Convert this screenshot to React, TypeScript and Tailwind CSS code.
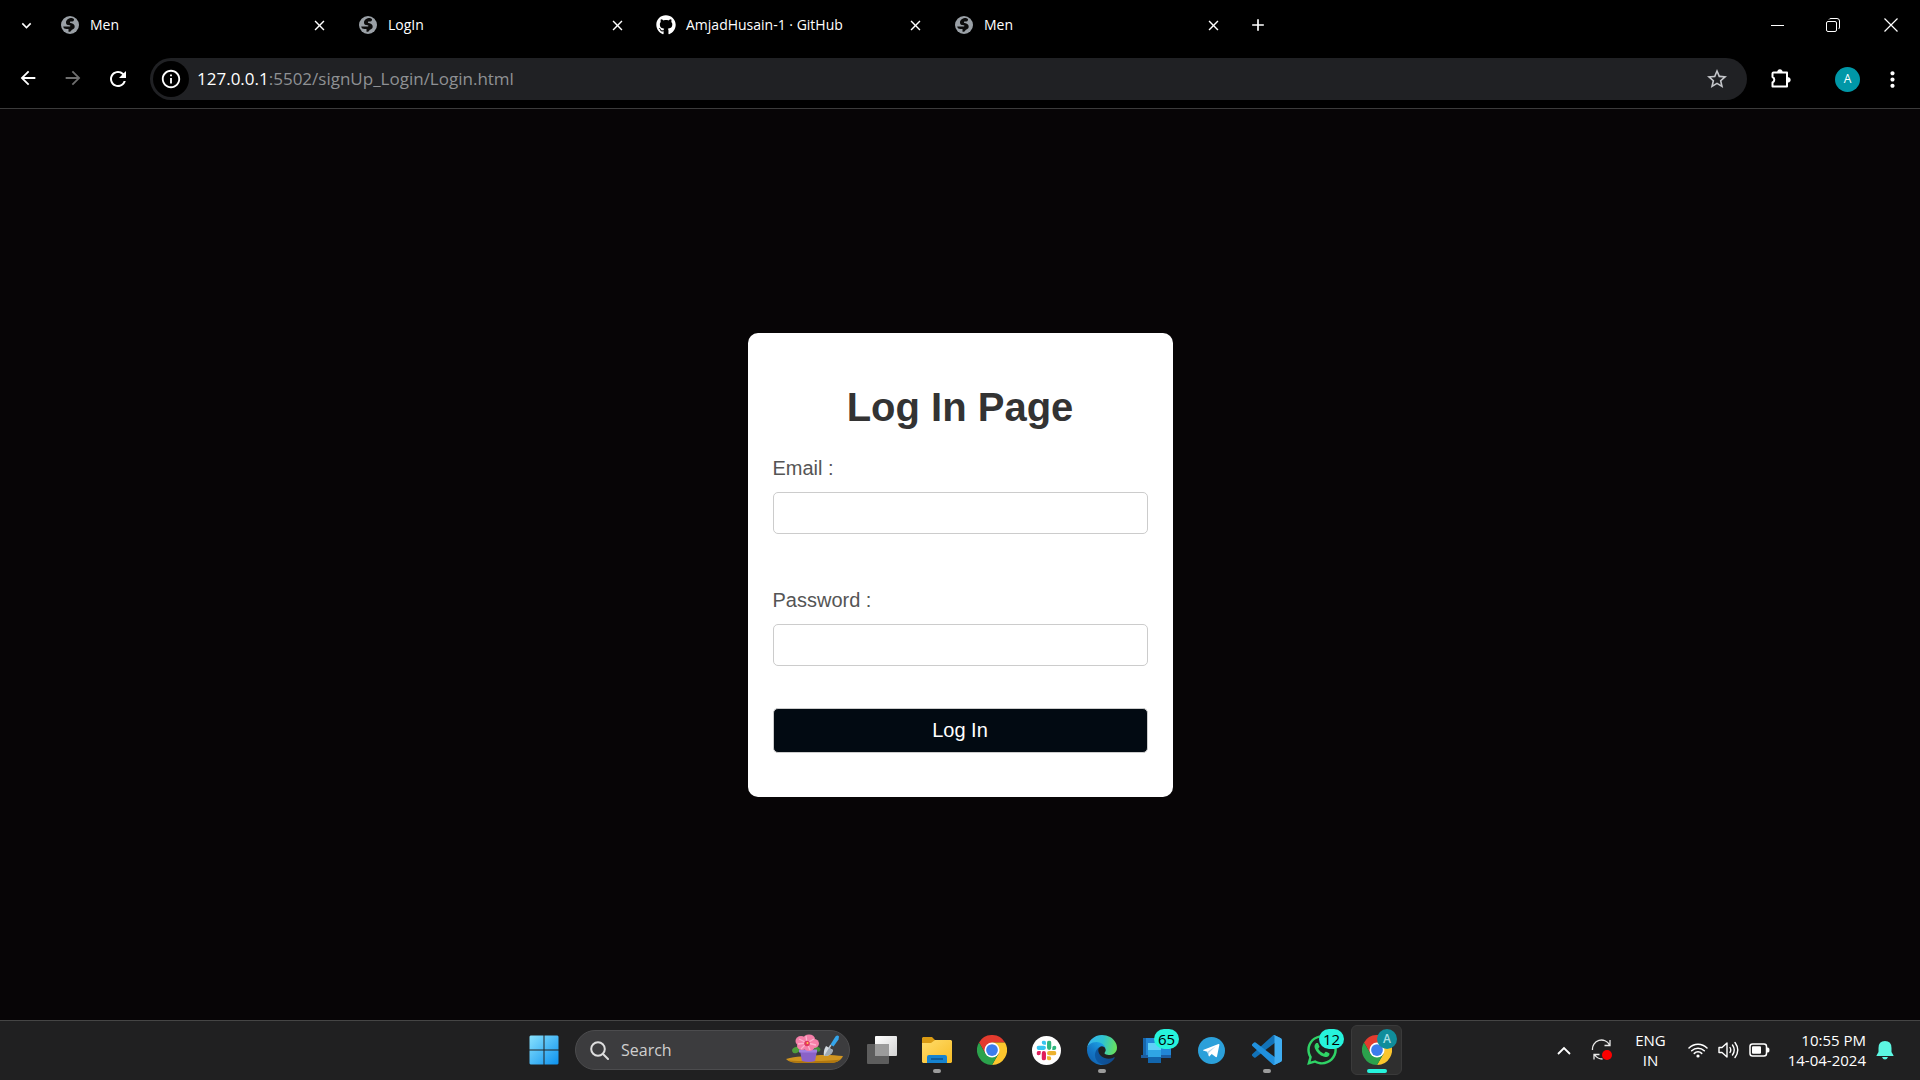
import React from "react";
import { MdArrowBack, MdArrowForward, MdRefresh, MdInfoOutline, MdStarBorder, MdMoreVert, MdClose, MdAdd, MdKeyboardArrowDown } from "react-icons/md";
import { FaGithub, FaWhatsapp } from "react-icons/fa";

const tabs = [
  { title: "Men", github: false },
  { title: "LogIn", github: false },
  { title: "AmjadHusain-1 · GitHub", github: true },
  { title: "Men", github: false },
];

function GlobeIcon() {
  return (
    <svg width="18" height="18" viewBox="0 0 18 18">
      <circle cx="9" cy="9" r="9" fill="#9aa0a6" />
      <path d="M11 2C7.500 2 5 4 5 6.500 5 9 7 9 8.800 9.200c.8.100.8 1 .1 1.300H2.200c.4 1.800 1.500 2.500 3.300 2.500h2v2.800c3.300.2 2.300-1.800 4-2.300 2-.6 2.500-2.200 2-4-.5-1.700-2.500-2.500-4-2.600-.8-.1-.7-1 0-1.400h1.800c1.200 0 1.700-.8 1.700-2.500z" fill="#0b0b0b" />
    </svg>
  );
}

function Tab({ title, github }: { title: string; github: boolean }) {
  return (
    <div className="flex w-[298px] items-center pl-2 pr-[22px]">
      <button className="flex grow items-center gap-2.5 text-left">
        <span className="flex w-5 justify-center">
          {github ? <FaGithub size={20} /> : <GlobeIcon />}
        </span>
        <span>{title}</span>
      </button>
      <button aria-label="Close tab">
        <MdClose size={17} />
      </button>
    </div>
  );
}

function ChromeLogo() {
  return (
    <svg width="30" height="30" viewBox="0 0 48 48">
      <path d="M24 12H44.8A24 24 0 0 0 3.2 12L13.6 30z" fill="#e33b2e" />
      <path d="M34.4 30 24 48A24 24 0 0 0 44.8 12H24z" fill="#fcc62d" />
      <path d="M13.6 30 3.2 12A24 24 0 0 0 24 48L34.4 30z" fill="#2ba24c" />
      <circle cx="24" cy="24" r="12" fill="#fff" />
      <circle cx="24" cy="24" r="9.4" fill="#3b7ded" />
    </svg>
  );
}

function WindowsLogo() {
  return (
    <svg width="30" height="30" viewBox="0 0 30 30">
      <defs>
        <linearGradient id="win" x1="0" y1="0" x2="30" y2="30" gradientUnits="userSpaceOnUse">
          <stop stopColor="#8be3fd" />
          <stop offset="1" stopColor="#0a90ee" />
        </linearGradient>
      </defs>
      <path fill="url(#win)" d="M1.500.500H14.500V14.500H.500V1.500zM15.500.500H28.500L29.500 1.500V14.500H15.500zM.500 15.500H14.500V29.500H1.500L.500 28.500zM15.500 15.500H29.500V28.500L28.500 29.500H15.500z" />
    </svg>
  );
}

function FlowerPot() {
  return (
    <svg width="60" height="32" viewBox="0 0 60 32">
      <path d="M1 25c7-2 14-3 20-2 12-3 26-2 37-1-2 5-8 7-13 7H16C9 29 4 28 1 25z" fill="#cf9420" />
      <path d="M3 26.500c14 1 38 1 52-1-3 3-6 3.500-10 3.500H16c-6 0-10-1-13-2.500z" fill="#b0770f" />
      <ellipse cx="11" cy="16" rx="4" ry="3" fill="#4e9d3c" transform="rotate(-25 11 16)" />
      <ellipse cx="32" cy="15" rx="3.500" ry="2.500" fill="#3f8f39" transform="rotate(20 32 15)" />
      <path d="M15 17h17l-2 10q-6 2-13 0z" fill="#8a62c8" />
      <path d="M14 15.500h18v3H14z" fill="#a27ee0" />
      <g fill="#f57fa9">
        <ellipse cx="16" cy="7" rx="5.500" ry="5" />
        <ellipse cx="24" cy="5" rx="6" ry="4.500" />
        <ellipse cx="29" cy="9.500" rx="5" ry="4.500" />
        <ellipse cx="24" cy="13" rx="5.500" ry="4" />
        <ellipse cx="17" cy="12" rx="5" ry="4" />
      </g>
      <path d="m22 9-8-4m8 4-1-7m1 7 7-4m-7 4 9 2m-9-2 3 7m-3-7-6 6m6-6-9 1" stroke="#fbb4cd" strokeWidth="1.300" />
      <circle cx="22" cy="9.500" r="2.800" fill="#e0375f" />
      <circle cx="22.500" cy="9" r="1" fill="#ffd04e" />
      <path d="M50.500 2.500q2-2 3.500 0l-.5 3-5 7-3-2z" fill="#35a6ec" />
      <path d="m46 11-2 3" stroke="#b8c4cf" strokeWidth="1.500" />
      <path d="m41 12 7 4q-1 6-9 6-1-5 2-10z" fill="#d5dce2" />
      <path d="m44 14-5 8q8 0 9-6z" fill="#9fabb6" />
    </svg>
  );
}

function TaskViewIcon() {
  return (
    <svg width="30" height="30" viewBox="0 0 30 30">
      <defs>
        <linearGradient id="tv" x1="0" y1="0" x2="1" y2="1"><stop stopColor="#fff" /><stop offset="1" stopColor="#d2d2d2" /></linearGradient>
      </defs>
      <rect y="9" width="22" height="20" rx="1" fill="#5d5d5d" />
      <rect x="8" y="1" width="22" height="20" rx="1" fill="url(#tv)" />
      <path d="M8 9h14v12H8z" fill="#9b9b9b" />
    </svg>
  );
}

function FolderIcon() {
  return (
    <svg width="30" height="30" viewBox="0 0 30 30">
      <defs>
        <linearGradient id="fold" x1="0" y1="0" x2="1" y2="1"><stop stopColor="#ffdc6b" /><stop offset="1" stopColor="#f8bc25" /></linearGradient>
      </defs>
      <path d="M1 2h9l3 3h16v8H0V3z" fill="#d99a13" />
      <path d="M0 8h9l4-3h16l1 1v21l-1 1H1l-1-1z" fill="url(#fold)" />
      <path d="M5 28v-6q0-2 2-2h16q2 0 2 2v6z" fill="#1683d0" />
      <path d="M9 24h12" stroke="#0b518e" strokeWidth="1.500" />
    </svg>
  );
}

function SlackIcon() {
  return (
    <svg width="29" height="29" viewBox="0 0 29 29">
      <circle cx="14.500" cy="14.500" r="14.500" fill="#fff" />
      <svg x="4.500" y="4.500" width="20" height="20" viewBox="0 0 24 24">
        <path fill="#e01e5a" d="M5.042 15.165a2.528 2.528 0 0 1-2.520 2.523A2.528 2.528 0 0 1 0 15.165a2.527 2.527 0 0 1 2.522-2.520h2.520v2.520zm1.271 0a2.527 2.527 0 0 1 2.521-2.520 2.527 2.527 0 0 1 2.521 2.520v6.313A2.528 2.528 0 0 1 8.834 24a2.528 2.528 0 0 1-2.521-2.522v-6.313z" />
        <path fill="#36c5f0" d="M8.834 5.042a2.528 2.528 0 0 1-2.521-2.520A2.528 2.528 0 0 1 8.834 0a2.528 2.528 0 0 1 2.521 2.522v2.520H8.834zm0 1.271a2.528 2.528 0 0 1 2.521 2.521 2.528 2.528 0 0 1-2.521 2.521H2.522A2.528 2.528 0 0 1 0 8.834a2.528 2.528 0 0 1 2.522-2.521h6.312z" />
        <path fill="#2eb67d" d="M18.956 8.834a2.528 2.528 0 0 1 2.522-2.521A2.528 2.528 0 0 1 24 8.834a2.528 2.528 0 0 1-2.522 2.521h-2.522V8.834zm-1.268 0a2.528 2.528 0 0 1-2.523 2.521 2.527 2.527 0 0 1-2.520-2.521V2.522A2.527 2.527 0 0 1 15.165 0a2.528 2.528 0 0 1 2.523 2.522v6.312z" />
        <path fill="#ecb22e" d="M15.165 18.956a2.528 2.528 0 0 1 2.523 2.522A2.528 2.528 0 0 1 15.165 24a2.527 2.527 0 0 1-2.520-2.522v-2.522h2.520zm0-1.268a2.527 2.527 0 0 1-2.520-2.523 2.526 2.526 0 0 1 2.520-2.520h6.313A2.527 2.527 0 0 1 24 15.165a2.528 2.528 0 0 1-2.522 2.523h-6.313z" />
      </svg>
    </svg>
  );
}

function EdgeIcon() {
  return (
    <svg width="30" height="30" viewBox="4.630 4.920 256 256">
      <defs>
        <linearGradient id="edgeDark" x1="63" y1="178" x2="241" y2="178" gradientUnits="userSpaceOnUse"><stop stopColor="#0c59a4" /><stop offset="1" stopColor="#114a8b" /></linearGradient>
        <linearGradient id="edgeBlue" x1="157" y1="110" x2="46" y2="232" gradientUnits="userSpaceOnUse"><stop stopColor="#1b9de2" /><stop offset=".6" stopColor="#1475c4" /><stop offset="1" stopColor="#1166b4" /></linearGradient>
        <linearGradient id="edgeTop" x1="20" y1="60" x2="250" y2="110" gradientUnits="userSpaceOnUse"><stop stopColor="#35b4ee" /><stop offset=".5" stopColor="#2fc4d0" /><stop offset="1" stopColor="#66e060" /></linearGradient>
      </defs>
      <path fill="url(#edgeDark)" d="M235.680 195.460a93.730 93.730 0 0 1-10.540 4.710 101.870 101.870 0 0 1-35.900 6.460c-47.320 0-88.540-32.550-88.540-74.320A31.480 31.480 0 0 1 117.130 105.030C74.330 106.830 63.330 151.430 63.330 177.560c0 73.880 68.090 81.370 82.760 81.370 7.910 0 19.840-2.300 27-4.560l1.310-.44a128.340 128.340 0 0 0 66.600-52.800 4 4 0 0 0-5.320-5.670z" />
      <path fill="url(#edgeBlue)" d="M110.340 246.340A79.200 79.200 0 0 1 87.600 225 80.720 80.720 0 0 1 117.130 105c3.120-1.470 8.450-4.130 15.540-4a32.350 32.350 0 0 1 25.690 13 31.880 31.880 0 0 1 6.360 18.660c0-.21 24.460-79.600-80-79.600-43.900 0-80 41.660-80 78.210a130.150 130.150 0 0 0 12.110 56 128 128 0 0 0 156.380 67.110 75.550 75.550 0 0 1-62.780-8z" />
      <path fill="url(#edgeTop)" d="M156.940 153.780c-.81 1.050-3.300 2.500-3.300 5.660 0 2.610 1.700 5.120 4.720 7.230 14.380 10 41.490 8.680 41.560 8.680a59.560 59.560 0 0 0 30.270-8.350 61.380 61.380 0 0 0 30.430-52.880c.26-22.410-8-37.310-11.340-43.910C228.090 28.760 182.350 4.920 132.610 4.920a128 128 0 0 0-128 126.200c.48-36.540 36.800-66.050 80-66.050 3.500 0 23.460.34 42 10.070 16.340 8.580 24.900 18.940 30.850 29.210 6.180 10.670 7.280 24.150 7.280 29.520s-2.740 13.330-7.800 19.910z" />
    </svg>
  );
}

function MonitorStackIcon() {
  return (
    <svg width="32" height="30" viewBox="0 0 32 30">
      <path d="M2 3h18v18H2z" fill="#1766ac" />
      <path d="M5 3h16v17H5z" fill="#2286d6" />
      <path d="M8 7h22v14H8z" fill="#2286d6" />
      <path d="M0 20h30v3H0z" fill="#1c5c9f" />
      <path d="M7 8h13v8H7z" fill="#5fd0f8" />
      <path d="M7 15h13v7H7z" fill="#2fa5e4" />
      <path d="M7 22h13v6H7z" fill="#1265ac" />
    </svg>
  );
}

function TelegramIcon() {
  return (
    <svg width="27" height="27" viewBox="0 0 27 27">
      <circle cx="13.500" cy="13.500" r="13.500" fill="#2ba0da" />
      <path d="m5 13 15.500-6q1-.3.900.8L19 19.500q-.4 1-1.300.5l-4-3-2.200 2.200q-.6.500-.8-.4L9.300 14.700 5.100 13.500z" fill="#fff" />
      <path d="m9.300 14.700 8.500-5.500-6.800 6.500-.3 3.300z" fill="#b8d8ec" />
    </svg>
  );
}

function CodeIcon() {
  return (
    <svg width="30" height="30" viewBox="0 0 100 100">
      <path d="M96.500 10.800 75.900.9a6.200 6.200 0 0 0-7.100 1.200L1.300 63.600a4.200 4.200 0 0 0 0 6.200l5.500 5a4.200 4.200 0 0 0 5.300.2L93.400 13.400c2.700-2.100 6.600-.1 6.600 3.300v-.2c0-2.400-1.400-4.600-3.500-5.700z" fill="#1272b8" />
      <path d="m96.500 89.200-20.600 9.900a6.200 6.200 0 0 1-7.100-1.200L1.300 36.400a4.200 4.200 0 0 1 0-6.200l5.500-5a4.200 4.200 0 0 1 5.300-.2l81.300 61.600c2.700 2.100 6.600.1 6.600-3.300v.2c0 2.400-1.400 4.600-3.500 5.700z" fill="#2090dd" />
      <path d="M75.900 99.100a6.200 6.200 0 0 1-7.100-1.200c2.300 2.300 6.200.7 6.200-2.600V4.700c0-3.300-3.900-4.900-6.200-2.600A6.200 6.200 0 0 1 75.900.9l20.600 9.900c2.100 1 3.500 3.200 3.500 5.600v67.200c0 2.400-1.400 4.600-3.500 5.600z" fill="#3fadf2" />
    </svg>
  );
}

function PuzzleIcon() {
  return (
    <svg width="24" height="24" viewBox="0 0 24 24">
      <path d="M4.500 5.500H18V19.500H3.500V15.500a3 3 0 0 0 0-5.500V6.500q0-1 1-1z" fill="none" stroke="#fff" strokeWidth="2" strokeLinejoin="round" />
      <path d="M8.500 5a2.400 2.400 0 0 1 4.800 0zM19 10.500a2.400 2.400 0 0 1 0 4.800z" fill="#fff" stroke="#fff" strokeWidth=".6" />
    </svg>
  );
}

function SyncIcon() {
  return (
    <svg width="22" height="22" viewBox="0 0 22 22" fill="none" stroke="#e8e8e8" strokeWidth="1.300">
      <path d="M1.500 11a9 9 0 0 1 17-5M19 1v5.500h-5.500M3 20.500v-5h5.500M3.500 15.500c2 3.500 5 4.500 8 4.500" />
      <circle cx="16" cy="16" r="5" fill="#fd0000" stroke="none" />
    </svg>
  );
}

function WifiIcon() {
  return (
    <svg width="20" height="16" viewBox="0 0 20 16" fill="none" stroke="#fff" strokeWidth="1.500" strokeLinecap="round">
      <path d="M1 6a12.700 12.700 0 0 1 18 0M3.700 8.800a9 9 0 0 1 12.600 0M6.300 11.400a5.200 5.200 0 0 1 7.400 0" />
      <circle cx="10" cy="14" r="1.600" fill="#fff" stroke="none" />
    </svg>
  );
}

function SpeakerIcon() {
  return (
    <svg width="21" height="18" viewBox="0 0 21 18" fill="none" stroke="#fff" strokeWidth="1.400" strokeLinecap="round" strokeLinejoin="round">
      <path d="M1 6.500h3L9 2v14l-5-4.500H1zM12 6.500q1.500 2.500 0 5M14.500 4q3.500 5 0 10M17 1.500q5.500 7.500 0 15" />
    </svg>
  );
}

function BatteryIcon() {
  return (
    <svg width="21" height="14" viewBox="0 0 21 14">
      <rect x="1" y="1" width="16.500" height="12" rx="2.500" fill="none" stroke="#fff" strokeWidth="1.500" />
      <rect x="3" y="3.200" width="9" height="7.600" rx="1" fill="#fff" />
      <path d="M18 4.500h1q1.500 0 1.500 2.500T19 9.500h-1z" fill="#fff" />
    </svg>
  );
}

function BellIcon() {
  return (
    <svg width="18" height="20" viewBox="0 0 18 20" fill="#5cf7e2">
      <path d="M9 1q6.500 0 6.500 7v4l2 3.500V16H.500v-.5l2-3.500V8Q2.500 1 9 1zM6 17h6q-1 2.500-3 2.500T6 17z" />
    </svg>
  );
}

function Slot({ label, running, active, badge, children }: { label: string; running?: boolean; active?: boolean; badge?: string; children: React.ReactNode }) {
  return (
    <button aria-label={label} className="relative flex h-[58px] w-[55px] items-center justify-center">
      {active && <span className="absolute inset-x-0.5 inset-y-1 rounded-md border border-[#3a3a3a] bg-[#2f2f2f]" />}
      <span className="relative">{children}</span>
      {badge && (
        <span className="absolute left-[25px] top-2 flex h-5 min-w-[23px] items-center justify-center rounded-full bg-[#26f3dc] px-1 text-[15px] text-black">
          {badge}
        </span>
      )}
      {active && (
        <span className="absolute left-7 top-2 flex size-5 items-center justify-center rounded-full bg-[#0f8d9b] text-xs font-semibold text-[#a9dfe4]">A</span>
      )}
      {running && <span className="absolute bottom-1.5 h-1 w-2 rounded-full bg-[#9b9b9b]" />}
      {active && <span className="absolute bottom-1.5 h-1 w-5 rounded-full bg-[#26f3dc]" />}
    </button>
  );
}

export default function App() {
  return (
    <div className="flex min-h-screen flex-col bg-black font-['Open_Sans',sans-serif] text-white">
      <header className="border-b border-[#3b3b3b]">
        <div className="flex h-[50px] items-center text-sm">
          <button aria-label="Search tabs" className="flex w-[52px] justify-center">
            <MdKeyboardArrowDown size={19} />
          </button>
          {tabs.map((tab, i) => (
            <Tab key={i} title={tab.title} github={tab.github} />
          ))}
          <button aria-label="New tab" className="ml-1">
            <MdAdd size={20} />
          </button>
          <div className="ml-auto flex">
            <button aria-label="Minimize" className="flex w-14 items-center justify-center">
              <svg width="13" height="13"><path d="M0 6.500h13" stroke="#fff" /></svg>
            </button>
            <button aria-label="Restore" className="flex w-14 items-center justify-center">
              <svg width="14" height="14" fill="none" stroke="#fff"><rect x=".5" y="3.500" width="10" height="10" rx="1.500" /><path d="M3 1.500q.5-1 2-1h6q2.500 0 2.500 2.500v6q0 1.500-1 2" /></svg>
            </button>
            <button aria-label="Close window" className="flex w-[59px] items-center justify-center">
              <svg width="14" height="14" stroke="#fff" strokeWidth="1.200"><path d="m.5.5 13 13M13.500.5l-13 13" /></svg>
            </button>
          </div>
        </div>
        <div className="flex h-[58px] items-center">
          <div className="flex w-[150px] pl-[5px]">
            <button aria-label="Back" className="flex w-[45px] justify-center"><MdArrowBack size={22} /></button>
            <button aria-label="Forward" className="flex w-[45px] justify-center text-[#6f6f6f]"><MdArrowForward size={22} /></button>
            <button aria-label="Reload" className="flex w-[45px] justify-center"><MdRefresh size={24} /></button>
          </div>
          <div className="flex h-[42px] grow items-center rounded-full bg-[#202124] pl-[3px] pr-[18px]">
            <button aria-label="Site information" className="flex size-9 items-center justify-center rounded-full bg-black"><MdInfoOutline size={22} /></button>
            <a href="#" className="ml-2 grow text-[17px] text-[#8f9194]"><span className="text-white">127.0.0.1</span>:5502/signUp_Login/Login.html</a>
            <button aria-label="Bookmark" className="text-[#c4c6ca]"><MdStarBorder size={24} /></button>
          </div>
          <div className="flex w-[173px] items-center pl-[22px]">
            <button aria-label="Extensions"><PuzzleIcon /></button>
            <button aria-label="Profile" className="ml-[42px] flex size-[25px] items-center justify-center rounded-full bg-[#0097a7] text-xs">A</button>
            <button aria-label="Menu" className="ml-5"><MdMoreVert size={25} /></button>
          </div>
        </div>
      </header>

      <main className="flex grow items-center justify-center bg-[#070506] font-['Liberation_Sans',sans-serif]">
        <form className="w-[425px] rounded-[10px] bg-white px-[25px] pb-11 pt-[51px]">
          <h1 className="text-center text-[40px] font-bold leading-[46px] text-[#333333]">Log In Page</h1>
          <label htmlFor="email" className="mt-[26px] block text-xl leading-6 text-[#555555]">Email :</label>
          <input id="email" type="email" className="mt-3 block h-[42px] w-full rounded-[5px] border border-[#cccccc] px-2.5 text-black" />
          <label htmlFor="password" className="mt-[54px] block text-xl leading-6 text-[#555555]">Password :</label>
          <input id="password" type="password" className="mt-3 block h-[42px] w-full rounded-[5px] border border-[#cccccc] px-2.5 text-black" />
          <button type="button" className="mt-[42px] block h-[45px] w-full rounded-[5px] border border-[#cccccc] bg-[#020a12] text-xl text-white">Log In</button>
        </form>
      </main>

      <footer className="grid h-[60px] grid-cols-[1fr_auto_1fr] items-start border-t border-[#454545] bg-[#202021]">
        <div />
        <div className="flex items-center">
          <Slot label="Start"><WindowsLogo /></Slot>
          <div className="mx-1 flex h-10 w-[275px] items-center rounded-full border border-[#4c4c4e] bg-[#3c3c3e] pl-3.5 pr-1">
            <svg width="19" height="19" viewBox="0 0 19 19" fill="none" stroke="#dedede" strokeWidth="2" strokeLinecap="round"><circle cx="8" cy="8" r="6.800" /><path d="m13 13 5 5" /></svg>
            <input aria-label="Search" placeholder="Search" className="ml-3 w-0 grow bg-transparent text-base placeholder:text-[#cfcfcf]" />
            <FlowerPot />
          </div>
          <Slot label="Task view"><TaskViewIcon /></Slot>
          <Slot label="File Explorer" running><FolderIcon /></Slot>
          <Slot label="Chrome"><ChromeLogo /></Slot>
          <Slot label="Slack"><SlackIcon /></Slot>
          <Slot label="Edge" running><EdgeIcon /></Slot>
          <Slot label="Phone Link" badge="65"><MonitorStackIcon /></Slot>
          <Slot label="Telegram"><TelegramIcon /></Slot>
          <Slot label="VS Code" running><CodeIcon /></Slot>
          <Slot label="WhatsApp" badge="12"><FaWhatsapp size={34} className="text-[#2fd366]" /></Slot>
          <Slot label="Chrome, profile A" active><ChromeLogo /></Slot>
        </div>
        <div className="flex h-[58px] items-center justify-end pr-[26px] text-[15px] leading-5">
          <button aria-label="Show hidden icons" className="mr-5"><svg width="14" height="9" fill="none" stroke="#fff" strokeWidth="1.800"><path d="m1 8 6-6 6 6" /></svg></button>
          <button aria-label="Sync" className="mr-[22px]"><SyncIcon /></button>
          <button className="mr-[22px] text-center">ENG<br />IN</button>
          <button aria-label="Network, sound and battery" className="mr-[18px] flex items-center gap-2.5"><WifiIcon /><SpeakerIcon /><BatteryIcon /></button>
          <button className="mr-2.5 text-right">10:55 PM<br />14-04-2024</button>
          <button aria-label="Notifications"><BellIcon /></button>
        </div>
      </footer>
    </div>
  );
}
